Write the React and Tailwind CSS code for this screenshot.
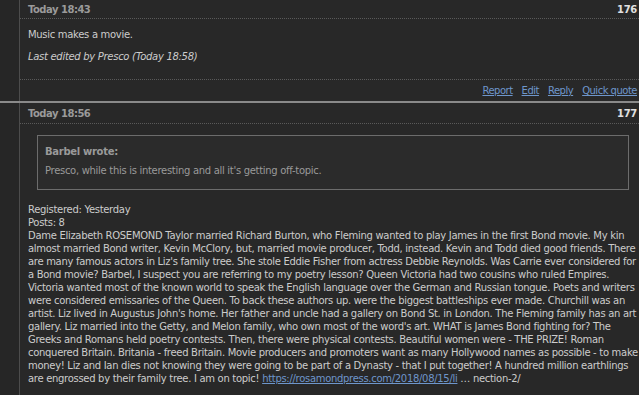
const lines = [
  "Dame Elizabeth ROSEMOND Taylor married Richard Burton, who Fleming wanted to play James in the first Bond movie. My kin",
  "almost married Bond writer, Kevin McClory, but, married movie producer, Todd, instead. Kevin and Todd died good friends. There",
  "are many famous actors in Liz's family tree. She stole Eddie Fisher from actress Debbie Reynolds. Was Carrie ever considered for",
  "a Bond movie? Barbel, I suspect you are referring to my poetry lesson? Queen Victoria had two cousins who ruled Empires.",
  "Victoria wanted most of the known world to speak the English language over the German and Russian tongue. Poets and writers",
  "were considered emissaries of the Queen. To back these authors up. were the biggest battleships ever made. Churchill was an",
  "artist. Liz lived in Augustus John's home. Her father and uncle had a gallery on Bond St. in London. The Fleming family has an art",
  "gallery. Liz married into the Getty, and Melon family, who own most of the word's art. WHAT is James Bond fighting for? The",
  "Greeks and Romans held poetry contests. Then, there were physical contests. Beautiful women were - THE PRIZE! Roman",
  "conquered Britain. Britania - freed Britain. Movie producers and promoters want as many Hollywood names as possible - to make",
  "money! Liz and Ian dies not knowing they were going to be part of a Dynasty - that I put together! A hundred million earthlings",
];

export default function App() {
  const font = { fontFamily: '"DejaVu Sans", Verdana, sans-serif' };
  return (
    <div
      className="w-[639px] h-[395px] overflow-hidden bg-[#262626] text-[10px] tracking-[-0.3px] leading-[13px] text-[#cccccc]"
      style={font}
    >
      {/* post 176 */}
      <div className="flex">
        <div className="w-[19px] shrink-0" />
        <div className="flex-1 border-l border-[#4c4c4c] bg-[#282828]">
          <div className="flex justify-between h-[19px] items-center pl-[8px] pr-[2px] border-b border-dotted border-[#5a5a5a]">
            <span className="font-bold text-[#9a9a9a] tracking-[-0.5px]">Today 18:43</span>
            <span className="font-bold text-[#e0e0e0]">176</span>
          </div>
          <div className="pl-[8px] pt-[9px] h-[61px] border-b border-dotted border-[#5a5a5a]">
            <p>Music makes a movie.</p>
            <p className="italic mt-[9px]">Last edited by Presco (Today 18:58)</p>
          </div>
          <div className="flex justify-end gap-[9px] h-[21px] items-center pr-[2px] text-[#6e96cb] tracking-[-0.5px]">
            <a className="underline">Report</a>
            <a className="underline">Edit</a>
            <a className="underline">Reply</a>
            <a className="underline">Quick quote</a>
          </div>
        </div>
      </div>

      <div className="h-[2px] bg-[#8a8a8a]" />

      {/* post 177 */}
      <div className="flex">
        <div className="w-[19px] shrink-0" />
        <div className="flex-1 border-l border-[#4c4c4c] bg-[#282828] h-[300px]">
          <div className="flex justify-between h-[21px] items-center pl-[8px] pr-[2px] border-b border-dotted border-[#5a5a5a]">
            <span className="font-bold text-[#9a9a9a] tracking-[-0.5px]">Today 18:56</span>
            <span className="font-bold text-[#e0e0e0]">177</span>
          </div>
          <div className="pl-[8px] pr-[1px] pt-[11px]">
            <div className="ml-[9px] mr-[9px] border border-[#6c6c6c] bg-[#2b2b2b] px-[7px] pt-[9px] pb-[12px] text-[#9a9a9a]">
              <p className="font-bold">Barbel wrote:</p>
              <p className="mt-[6px]">Presco, while this is interesting and all it's getting off-topic.</p>
            </div>
            <div className="mt-[13px] whitespace-nowrap">
              <p>Registered: Yesterday</p>
              <p>Posts: 8</p>
              <p>
                {lines.map((l) => (
                  <span key={l}>
                    {l}
                    <br />
                  </span>
                ))}
                are engrossed by their family tree. I am on topic!{" "}
                <a className="underline text-[#6e96cb]">https://rosamondpress.com/2018/08/15/li</a> … nection-2/
              </p>
            </div>
          </div>
        </div>
      </div>
    </div>
  );
}
